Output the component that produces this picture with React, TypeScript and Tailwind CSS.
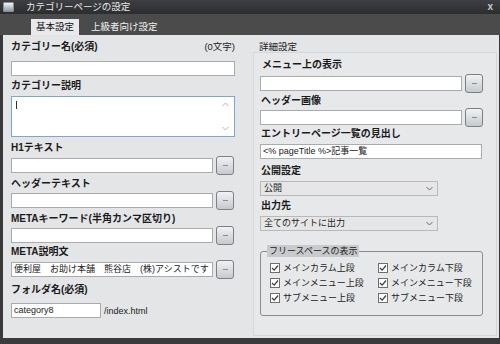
import React from "react";

const jp = "font-['Liberation_Sans','Noto_Sans_CJK_JP',sans-serif]";

/** Small "..." browse button next to an input. */
const DotButton = (): React.JSX.Element => (
  <div className="ml-[3px] flex h-[19px] w-[18px] shrink-0 items-center justify-center rounded-[3px] border border-[#7d7f83] bg-gradient-to-b from-[#f1f2f4] to-[#c6c9ce]">
    <div className="h-px w-[5px] bg-[#8a8d92]" />
  </div>
);

const Label = ({ text, className = "" }: { text: string; className?: string }) => (
  <div className={`h-[12px] text-[10px] leading-[12px] font-bold text-[#1b1b1b] ${className}`}>{text}</div>
);

const Input = ({ value = "", className = "" }: { value?: string; className?: string }) => (
  <div
    className={`flex h-[15px] items-center overflow-hidden whitespace-nowrap border border-[#a9abae] bg-white px-[2px] text-[9px] leading-[13px] text-[#222] ${className}`}
  >
    {value}
  </div>
);

const InputRow = ({ value = "", width }: { value?: string; width: string }) => (
  <div className="flex items-center">
    <Input value={value} className={width} />
    <DotButton />
  </div>
);

const Select = ({ value }: { value: string }) => (
  <div className="flex h-[15px] w-[178px] items-center justify-between border border-[#b7b9bc] bg-[#e6e6e6] px-[3px] text-[9px] leading-[13px] text-[#222]">
    <span>{value}</span>
    <svg width="7" height="5" viewBox="0 0 7 5" className="mr-[1px]">
      <path d="M0.5 1 L3.5 4 L6.5 1" fill="none" stroke="#6b6b6b" strokeWidth="1" />
    </svg>
  </div>
);

const Check = ({ text }: { text: string }) => (
  <div className="flex h-[15px] items-center gap-[3px] text-[9px] leading-[12px] text-[#222]">
    <div className="flex h-[10px] w-[10px] items-center justify-center border border-[#6e6e6e] bg-white">
      <svg width="8" height="8" viewBox="0 0 8 8">
        <path d="M1 4 L3.2 6.2 L7 1.5" fill="none" stroke="#3a3a3a" strokeWidth="1.2" />
      </svg>
    </div>
    <span>{text}</span>
  </div>
);

const App = (): React.JSX.Element => {
  return (
    <div className={`flex h-[344px] w-[500px] flex-col bg-[#3a3a3c] ${jp}`}>
      {/* Title bar */}
      <div className="flex h-[14px] items-center bg-gradient-to-b from-[#3e3f42] to-[#2c2d2f] px-[3px]">
        <div className="h-[10px] w-[11px] rounded-[1px] border border-[#8a8f97] bg-gradient-to-b from-[#f4f6f8] to-[#8e9aa8]" />
        <span className="ml-[12px] text-[9.5px] leading-[12px] text-[#e9e9e9]">カテゴリーページの設定</span>
        <span className="ml-auto mr-[4px] text-[10px] leading-[12px] font-bold text-[#c9c9c9]">x</span>
      </div>

      {/* Tabs */}
      <div className="flex h-[21px] items-end bg-[#4b4b4c] pl-[31px]">
        <div className="flex h-[16px] w-[48px] items-center justify-center bg-[#e8e9eb] text-[9.5px] leading-[12px] text-[#111]">
          基本設定
        </div>
        <div className="flex h-[16px] items-center pl-[12px] text-[9.5px] leading-[12px] text-[#f0f0f0]">
          上級者向け設定
        </div>
      </div>

      {/* Content */}
      <div className="ml-[3px] mr-[1px] flex h-[303px] bg-[#e4e5e7]">
        {/* Left column */}
        <div className="w-[250px] shrink-0 pl-[8px] pt-[6px]">
          <div className="flex w-[224px] justify-between">
            <Label text="カテゴリー名(必須)" />
            <span className="text-[9.5px] leading-[12px] text-[#222]">(0文字)</span>
          </div>
          <Input className="mt-[8px] w-[224px]" />

          <Label text="カテゴリー説明" className="mt-[4px]" />
          <div className="relative mt-[4px] h-[41px] w-[224px] border border-[#7fa6d3] bg-white">
            <div className="absolute left-[4px] top-[4px] h-[8px] w-px bg-[#333]" />
            <svg width="7" height="5" viewBox="0 0 7 5" className="absolute right-[5px] top-[5px]">
              <path d="M0.5 4 L3.5 1 L6.5 4" fill="none" stroke="#b5b5b5" strokeWidth="1" />
            </svg>
            <svg width="7" height="5" viewBox="0 0 7 5" className="absolute bottom-[5px] right-[5px]">
              <path d="M0.5 1 L3.5 4 L6.5 1" fill="none" stroke="#b5b5b5" strokeWidth="1" />
            </svg>
          </div>

          <Label text="H1テキスト" className="mt-[5px]" />
          <div className="mt-[2px]">
            <InputRow width="w-[202px]" />
          </div>

          <Label text="ヘッダーテキスト" className="mt-[3px]" />
          <div className="mt-[1px]">
            <InputRow width="w-[202px]" />
          </div>

          <Label text="METAキーワード(半角カンマ区切り)" className="mt-[3px]" />
          <div className="mt-[1px]">
            <InputRow width="w-[202px]" />
          </div>

          <Label text="META説明文" className="mt-[1px]" />
          <div className="mt-[2px]">
            <InputRow width="w-[202px]" value="便利屋　お助け本舗　熊谷店　(株)アシストです" />
          </div>

          <Label text="フォルダ名(必須)" className="mt-[5px]" />
          <div className="mt-[7px] flex items-center">
            <Input className="w-[90px]" value="category8" />
            <span className="ml-[3px] text-[9px] leading-[12px] text-[#222]">/index.html</span>
          </div>
        </div>

        {/* Right column */}
        <div className="flex flex-1 flex-col pt-[6px]">
          <div className="pl-[6px] text-[9.5px] leading-[12px] text-[#222]">詳細設定</div>
          <div className="mr-[2px] mt-[-1px] h-[284px] border border-[#d6d7da] bg-[#e7e8ea] pl-[6px] pt-[6px]">
            <Label text="メニュー上の表示" className="pl-[2px]" />
            <div className="mt-[3px]">
              <InputRow width="w-[202px]" />
            </div>

            <Label text="ヘッダー画像" className="mt-[2px] pl-[1px]" />
            <div className="mt-[1px]">
              <InputRow width="w-[202px]" />
            </div>

            <Label text="エントリーページ一覧の見出し" className="mt-[1px] pl-[1px]" />
            <Input className="mt-[4px] w-[222px]" value="<% pageTitle %>記事一覧" />

            <Label text="公開設定" className="mt-[6px] pl-[1px]" />
            <div className="mt-[4px]">
              <Select value="公開" />
            </div>

            <Label text="出力先" className="mt-[4px] pl-[1px]" />
            <div className="mt-[4px]">
              <Select value="全てのサイトに出力" />
            </div>

            <div className="relative mt-[20px] h-[65px] w-[223px] rounded-[3px] border border-[#8b8c8f] pl-[9px] pt-[8px]">
              <div className="absolute left-[6px] top-[-7px] bg-[#c9cacd] px-[2px] text-[9px] leading-[12px] text-[#222]">
                フリースペースの表示
              </div>
              <div className="grid grid-cols-[108px_1fr]">
                <Check text="メインカラム上段" />
                <Check text="メインカラム下段" />
                <Check text="メインメニュー上段" />
                <Check text="メインメニュー下段" />
                <Check text="サブメニュー上段" />
                <Check text="サブメニュー下段" />
              </div>
            </div>
          </div>
        </div>
      </div>
    </div>
  );
};

export default App;
